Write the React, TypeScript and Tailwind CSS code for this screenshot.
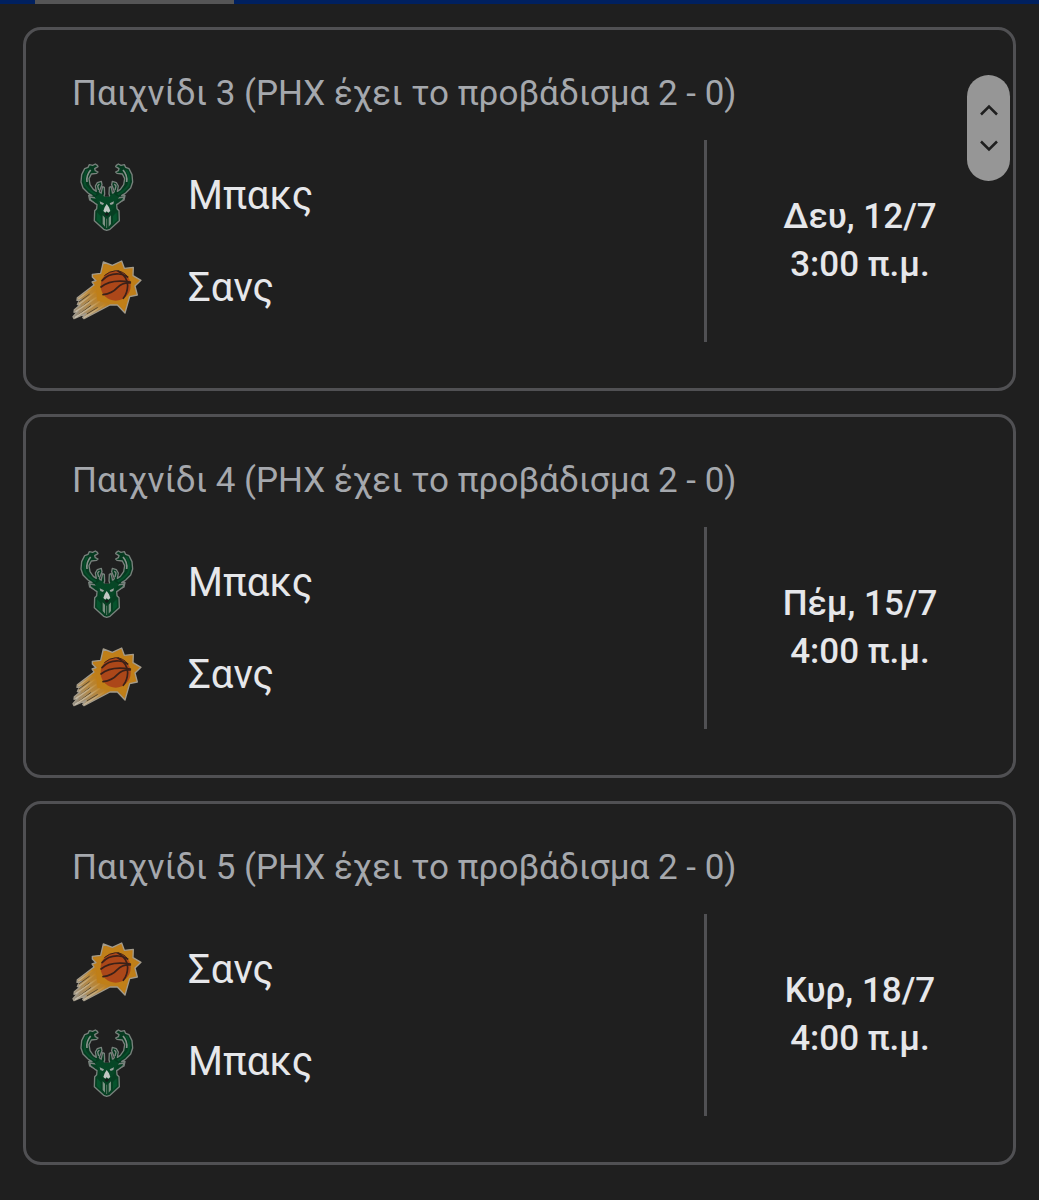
import React from 'react';

type Team = 'bucks' | 'suns';

interface Game {
  id: number;
  title: string;
  teams: Team[];
  date: string;
  time: string;
}

const games: Game[] = [
  { id: 3, title: 'Παιχνίδι 3 (PHX έχει το προβάδισμα 2 - 0)', teams: ['bucks', 'suns'], date: 'Δευ, 12/7', time: '3:00 π.μ.' },
  { id: 4, title: 'Παιχνίδι 4 (PHX έχει το προβάδισμα 2 - 0)', teams: ['bucks', 'suns'], date: 'Πέμ, 15/7', time: '4:00 π.μ.' },
  { id: 5, title: 'Παιχνίδι 5 (PHX έχει το προβάδισμα 2 - 0)', teams: ['suns', 'bucks'], date: 'Κυρ, 18/7', time: '4:00 π.μ.' },
];

// One antler, mirrored for the other side
const Antler: React.FC = () => (
  <g strokeLinejoin="round">
    <path
      d="M112 46 L106 42 L98 46 L88 44 L84 52 L74 56 L65 74 L63 96 L69 114 L84 129 L96 137 L86 136 L89 150 L100 156 L112 160 L128 150 L134 132 L133 112 L128 110 L125 122 L123 132 L118 124 L126 104 L124 94 L112 98 L106 108 L109 124 L100 118 L90 104 L87 86 L94 72 L110 70 L114 66 L106 62 L104 56 L114 50 Z"
      fill="#063a20"
      stroke="#78817c"
      strokeWidth="4"
    />
    <path d="M82 60 Q68 80 76 106 Q86 122 108 134" fill="none" stroke="#074f2b" strokeWidth="6" />
    <path d="M92 60 Q78 76 81 96" fill="none" stroke="#87938c" strokeWidth="5" />
    <path d="M118 102 L113 108 L116 120" fill="none" stroke="#7d8881" strokeWidth="4" />
  </g>
);

const BucksLogo: React.FC = () => (
  <svg viewBox="36 33 210 210" className="h-[70px] w-[70px] shrink-0" aria-hidden="true">
    <Antler />
    <g transform="translate(281 0) scale(-1 1)">
      <Antler />
    </g>
    <path
      d="M122 138 L132 142 L149 142 L159 138 L172 144 L192 141 L189 150 L176 160 L170 164 L171 176 L177 182 L178 212 L164 225 L150 238 L140 241 L131 238 L117 225 L103 212 L104 182 L110 176 L111 164 L105 160 L92 150 L89 141 L109 144 Z"
      fill="#063f22"
      stroke="#78817c"
      strokeWidth="4"
      strokeLinejoin="round"
    />
    <path d="M104 142 L122 130 L133 140 L148 140 L159 130 L177 142 L166 158 L164 172 L155 184 L126 184 L117 172 L115 158 Z" fill="#064726" />
    <path d="M119 154 L132 160 L129 165 L121 162 Z M162 154 L149 160 L152 165 L160 162 Z" fill="#9aa39e" />
    <path d="M140 162 L147 172 L151 183 L145 188 L140 184 L136 188 L130 183 L134 172 Z" fill="#c1c7c3" />
    <path d="M134 189 L147 189 L145 195 L140 198 L136 195 Z" fill="#151d19" />
    <path d="M128 196 L135 203 L135 230 L128 222 Z M153 196 L146 203 L146 230 L153 222 Z" fill="#7c9183" />
    <path d="M111 187 L122 198 L122 221 L110 210 Z M170 187 L159 198 L159 221 L171 210 Z" fill="#06542d" />
    <path d="M140 206 V234" stroke="#5d7767" strokeWidth="3" />
  </svg>
);

const SunsLogo: React.FC = () => (
  <svg viewBox="36 9 210 210" className="h-[70px] w-[70px] shrink-0" aria-hidden="true">
    <defs>
      <linearGradient id="suns-tail" x1="46" y1="200" x2="124" y2="132" gradientUnits="userSpaceOnUse">
        <stop offset="0" stopColor="#948d80" />
        <stop offset="0.4" stopColor="#ad8c58" />
        <stop offset="1" stopColor="#bf7e1a" />
      </linearGradient>
      <linearGradient id="suns-streak" x1="46" y1="200" x2="120" y2="140" gradientUnits="userSpaceOnUse">
        <stop offset="0" stopColor="#c4bdae" />
        <stop offset="0.6" stopColor="#c4a97a" />
        <stop offset="1" stopColor="#c48014" />
      </linearGradient>
    </defs>
    <path
      d="M130 36 L157 46 L185 33 L193 55 L220 52 L219 77 L243 91 L225 108 L232 135 L209 140 L195 189 L172 165 L150 165 L72 206 L68 202 L78 190 L42 206 L39 200 L54 183 L42 187 L43 179 L60 165 L52 164 L55 157 L66 148 L51 151 L52 143 L102 105 L96 96 L108 92 L97 81 L97 73 L122 70 Z"
      fill="url(#suns-tail)"
      stroke="#a39b8b"
      strokeWidth="4"
      strokeLinejoin="round"
    />
    <path
      d="M134 42 L157 52 L181 41 L189 60 L214 58 L213 80 L235 92 L219 107 L225 130 L204 135 L192 181 L174 160 L145 160 L112 152 L108 110 L116 94 L104 78 L127 74 Z"
      fill="#c07f18"
    />
    <g fill="none" stroke="#5a4a30" strokeWidth="3" strokeLinecap="round">
      <path d="M88 133 L58 155" />
      <path d="M88 153 L56 178" />
      <path d="M92 167 L56 194" />
      <path d="M112 173 L82 191" />
    </g>
    <g fill="none" stroke="url(#suns-streak)" strokeWidth="4" strokeLinecap="round">
      <path d="M104 110 L56 146" />
      <path d="M106 126 L58 162" />
      <path d="M108 143 L48 184" />
      <path d="M118 155 L46 202" />
      <path d="M135 164 L73 202" />
    </g>
    <circle cx="167" cy="107" r="45" fill="#ac4719" />
    <g fill="none" stroke="#3b2119" strokeWidth="5" strokeLinecap="round">
      <path d="M126 92 Q146 70 176 72 Q192 73 203 81" />
      <path d="M123 111 Q152 86 211 96" />
      <path d="M129 134 Q156 131 172 113 Q188 97 211 99" />
      <path d="M174 63 Q203 80 203 107 Q202 130 190 145" />
      <path d="M134 76 Q148 64 167 62 Q190 63 203 80" strokeWidth="3" />
    </g>
  </svg>
);

const teamNames: Record<Team, string> = {
  bucks: 'Μπακς',
  suns: 'Σανς',
};

const GameCard: React.FC<{ game: Game }> = ({ game }) => (
  <article className="rounded-[18px] border-[3px] border-[#505053] pt-[40px] pb-[46px] pl-[46px]">
    <h2 className="mb-[22px] text-[35px] leading-[48px] text-[#a5a8ad]">{game.title}</h2>
    <div className="flex h-[202px]">
      <ul className="flex-1 pt-[10px]">
        {game.teams.map((team) => (
          <li key={team} className="flex h-[92px] items-center gap-[46px]">
            {team === 'bucks' ? <BucksLogo /> : <SunsLogo />}
            <span className="text-[40px] leading-[48px] text-[#e6e7ea]">{teamNames[team]}</span>
          </li>
        ))}
      </ul>
      <div className="flex w-[309px] flex-col justify-center border-l-[3px] border-[#505053] text-center text-[35px] leading-[48px] font-medium text-[#e6e7ea]">
        <p>{game.date}</p>
        <p>{game.time}</p>
      </div>
    </div>
  </article>
);

const App: React.FC = () => {
  return (
    <div className="relative min-h-screen bg-[#1f1f1f] font-[Roboto,sans-serif]">
      {/* Tab indicator */}
      <div className="h-1 bg-[#00205f] pl-[35px]">
        <div className="h-1 w-[199px] bg-[#555556]" />
      </div>

      <main className="flex flex-col gap-[23px] px-[23px] pt-[23px] pb-[36px]">
        {games.map((game) => (
          <GameCard key={game.id} game={game} />
        ))}
      </main>

      {/* Floating scroll control */}
      <div className="absolute top-[75px] right-[29px] flex h-[106px] w-[43px] flex-col items-center justify-center rounded-full bg-[#969696]">
        <button type="button" aria-label="Προηγούμενο" className="flex h-[36px] w-full items-center justify-center">
          <svg viewBox="0 0 20 12" className="h-3 w-5" fill="none" stroke="#1f1f1f" strokeWidth="2.5">
            <path d="M2 10.5 L10 2.5 L18 10.5" />
          </svg>
        </button>
        <button type="button" aria-label="Επόμενο" className="flex h-[36px] w-full items-center justify-center">
          <svg viewBox="0 0 20 12" className="h-3 w-5" fill="none" stroke="#1f1f1f" strokeWidth="2.5">
            <path d="M2 1.5 L10 9.5 L18 1.5" />
          </svg>
        </button>
      </div>
    </div>
  );
};

export default App;
